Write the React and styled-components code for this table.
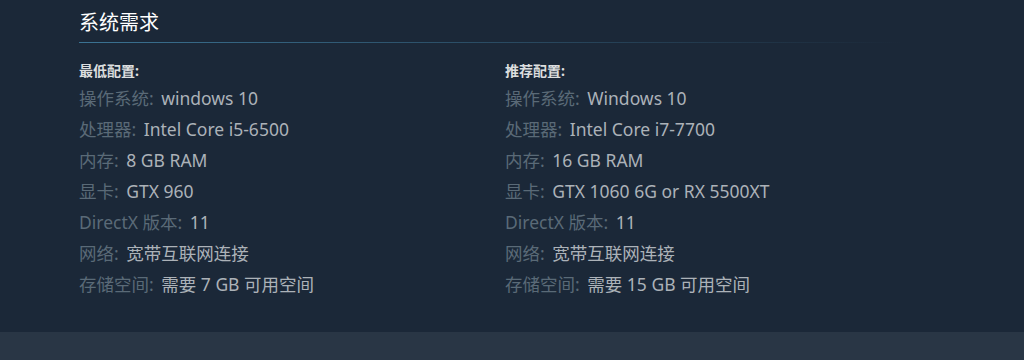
import React from 'react';
import styled, { createGlobalStyle } from 'styled-components';

const GlobalStyle = createGlobalStyle`
   html, body {
      margin: 0;
      padding: 0;
      background: #1b2838;
   }
   body {
      font-family: "Noto Sans", "Noto Sans CJK SC", sans-serif;
   }
`;

const specs = [
   {
      id: 'min',
      title: '最低配置:',
      rows: [
         ['操作系统:', 'windows 10'],
         ['处理器:', 'Intel Core i5-6500'],
         ['内存:', '8 GB RAM'],
         ['显卡:', 'GTX 960'],
         ['DirectX 版本:', '11'],
         ['网络:', '宽带互联网连接'],
         ['存储空间:', '需要 7 GB 可用空间'],
      ],
   },
   {
      id: 'rec',
      title: '推荐配置:',
      rows: [
         ['操作系统:', 'Windows 10'],
         ['处理器:', 'Intel Core i7-7700'],
         ['内存:', '16 GB RAM'],
         ['显卡:', 'GTX 1060 6G or RX 5500XT'],
         ['DirectX 版本:', '11'],
         ['网络:', '宽带互联网连接'],
         ['存储空间:', '需要 15 GB 可用空间'],
      ],
   },
];

const App = () => {
   return (
      <>
         <GlobalStyle />
         <Page>
            <Section>
               <Title>系统需求</Title>

               <Columns>
                  {specs.map(spec => (
                     <Col key={spec.id}>
                        <Heading>{spec.title}</Heading>
                        <List>
                           {spec.rows.map(([label, value]) => (
                              <Row key={label}>
                                 <Label>{label}</Label> {value}
                              </Row>
                           ))}
                        </List>
                     </Col>
                  ))}
               </Columns>
            </Section>
         </Page>
         <Footer />
      </>
   );
};

export default App;

const Page = styled.div`
   height: 332px;
   background: #1b2838;
   overflow: hidden;
`;

const Section = styled.section`
   margin-left: 79px;
   width: 866px;
`;

const Title = styled.h2`
   margin: 0;
   padding: 10px 0 6px;
   font-size: 20px;
   line-height: 26px;
   font-weight: normal;
   color: #ffffff;
   border-bottom: 1px solid transparent;
   border-image: linear-gradient(to right, #3b7393 0%, rgba(59, 115, 147, 0.5) 45%, rgba(59, 115, 147, 0) 95%) 1;
`;

const Columns = styled.div`
   display: grid;
   grid-template-columns: 426px 1fr;
   margin-top: 19px;
`;

const Col = styled.div`
   display: flex;
   flex-direction: column;
`;

const Heading = styled.div`
   font-size: 14px;
   line-height: 18px;
   font-weight: bold;
   color: #dcdedf;
`;

const List = styled.ul`
   list-style: none;
   margin: 3px 0 0;
   padding: 0;
`;

const Row = styled.li`
   font-size: 17.5px;
   line-height: 31px;
   color: #acb2b8;
   white-space: nowrap;
`;

const Label = styled.span`
   margin-right: 3px;
   color: #5a6a77;
`;

const Footer = styled.div`
   height: 28px;
   background: #293645;
`;
